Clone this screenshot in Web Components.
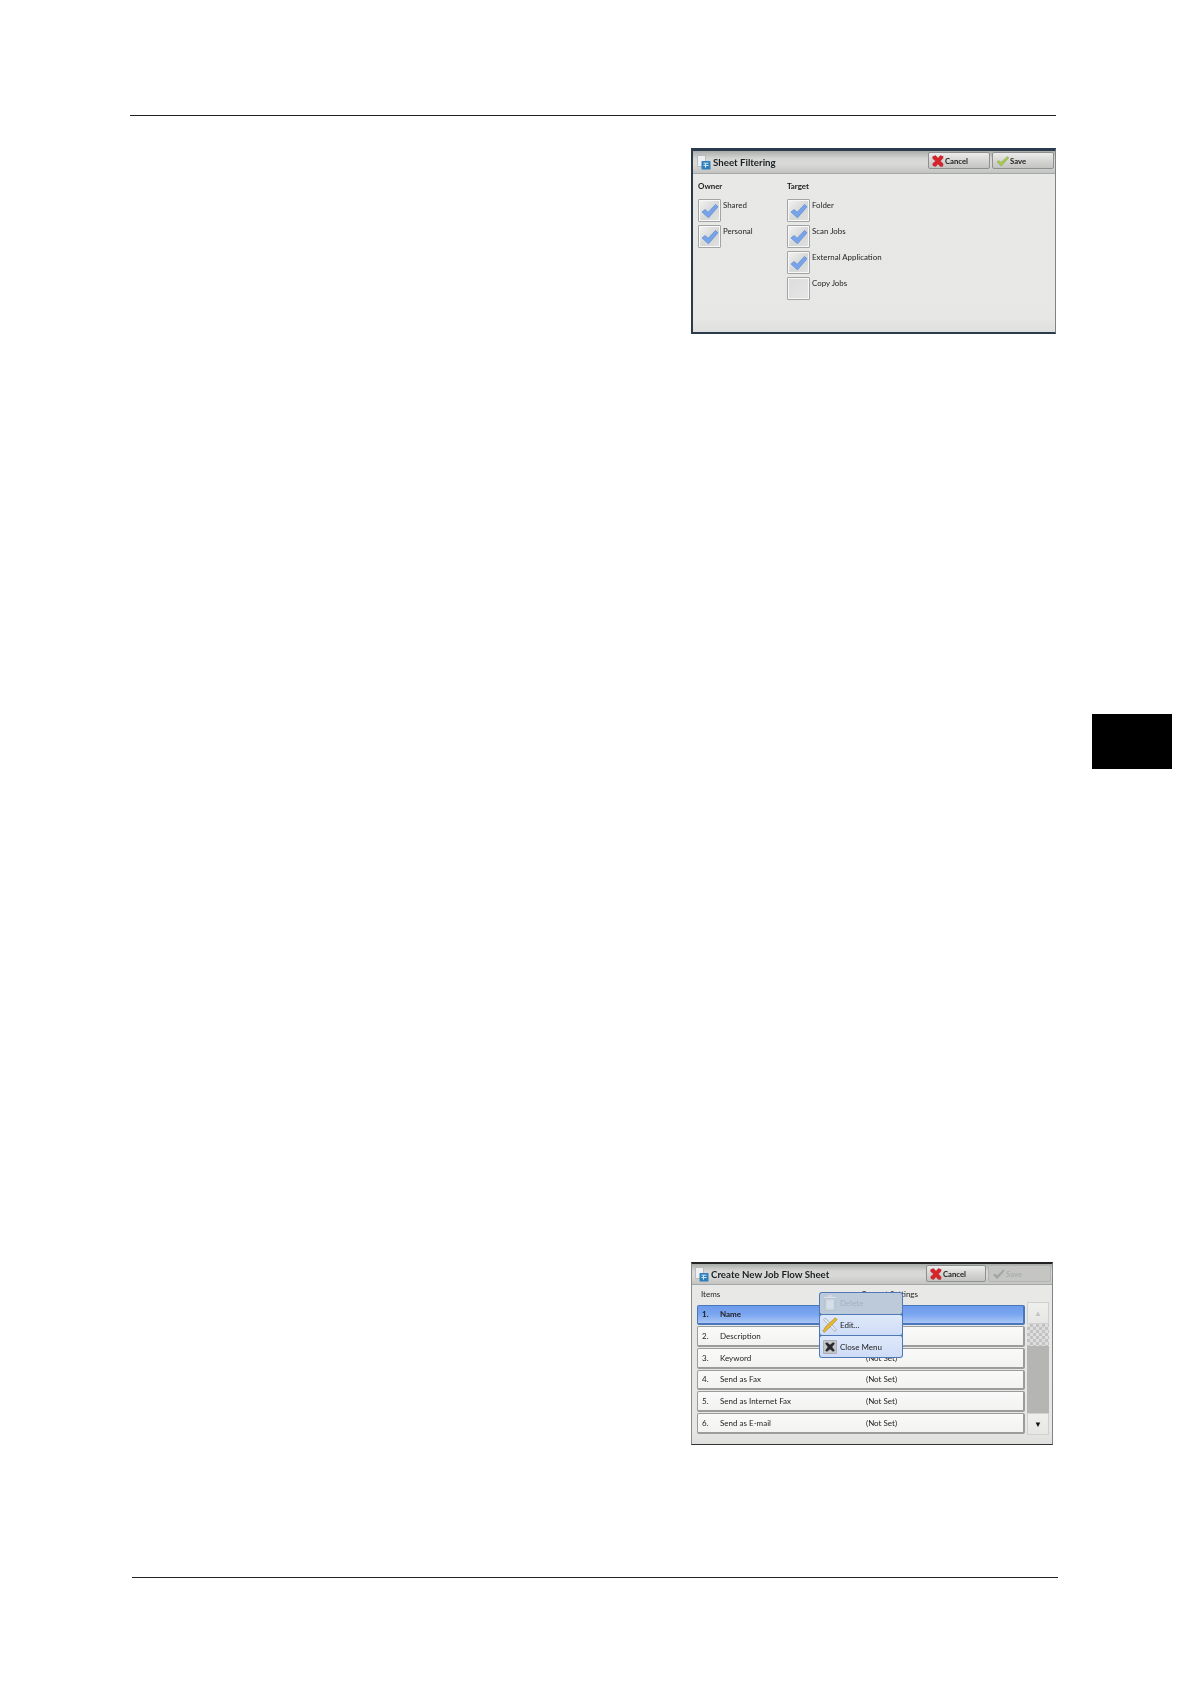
<!DOCTYPE html>
<html lang="en"><head><meta charset="utf-8"><title>Sheets</title>
<style>
html,body{margin:0;padding:0;background:#fff}
body{font-family:Lato,"Liberation Sans",sans-serif;color:#222}
</style></head><body>
<manual-page>
  <sheet-panel slot="top" title-text="Sheet Filtering" style="--w:365px;--h:186px;--bar:23px;--lb:2px solid #2b3a4c;--tb:3px solid #2b3a4c;--bb:2px solid #2b3a4c;--pl:4px">
    <ui-btn slot="actions" icon="x" style="--bw:62px">Cancel</ui-btn>
    <ui-btn slot="actions" icon="ok" style="--bw:62px">Save</ui-btn>
    <filter-body>
      <check-col slot="owner" heading="Owner">
        <ui-check checked>Shared</ui-check>
        <ui-check checked>Personal</ui-check>
      </check-col>
      <check-col slot="target" heading="Target">
        <ui-check checked>Folder</ui-check>
        <ui-check checked>Scan Jobs</ui-check>
        <ui-check checked>External Application</ui-check>
        <ui-check>Copy Jobs</ui-check>
      </check-col>
    </filter-body>
  </sheet-panel>
  <sheet-panel slot="bottom" title-text="Create New Job Flow Sheet" style="--w:362px;--h:183px;--bar:21px;--lb:1px solid #8a8c8c;--tb:2px solid #222;--bb:1px solid #333;--pl:3px">
    <ui-btn slot="actions" icon="x" style="--bw:60px">Cancel</ui-btn>
    <ui-btn slot="actions" icon="ok" disabled style="--bw:63px">Save</ui-btn>
    <item-list>
      <item-row selected num="1." name="Name" value=""></item-row>
      <item-row num="2." name="Description" value=""></item-row>
      <item-row num="3." name="Keyword" value="(Not Set)"></item-row>
      <item-row num="4." name="Send as Fax" value="(Not Set)"></item-row>
      <item-row num="5." name="Send as Internet Fax" value="(Not Set)"></item-row>
      <item-row num="6." name="Send as E-mail" value="(Not Set)"></item-row>
      <pop-menu slot="menu">
        <menu-item icon="trash" disabled>Delete</menu-item>
        <menu-item icon="edit">Edit...</menu-item>
        <menu-item icon="close">Close Menu</menu-item>
      </pop-menu>
    </item-list>
  </sheet-panel>
</manual-page>
<script>
function def(name, html){
  customElements.define(name, class extends HTMLElement{
    constructor(){super();this.attachShadow({mode:'open'}).innerHTML=typeof html==='function'?'':html;}
    connectedCallback(){ if(typeof html==='function') this.shadowRoot.innerHTML=html(this); }
  });
}
const ICONS={
 x:`<svg width="12" height="12" viewBox="0 0 12 12"><path d="M.8 1.600 3.600.6 6 3.200 8.400.6l2.800 1-.4 2L8.400 6l2.800 3-.6 2.600-2.600-.4L6 8.800 3.800 11.400 1.200 10.800.6 8.800 3.600 6 .6 3.400z" fill="#d8232a" stroke="#a81c20" stroke-width=".4"/></svg>`,
 ok:`<svg width="13" height="12" viewBox="0 0 13 12"><path d="M1 7 3 5.500 5 7.500 11.500 1.500 12.800 2.800 5.200 11z" fill="#a4cc48" stroke="#8a9c50" stroke-width=".5"/></svg>`,
 okOff:`<svg width="13" height="12" viewBox="0 0 13 12"><path d="M1 7 3 5.500 5 7.500 11.500 1.500 12.800 2.800 5.200 11z" fill="#a2a6a6"/></svg>`,
 trash:`<svg width="14" height="16" viewBox="0 0 14 16"><path d="M2 3.500h10v12H2z" fill="#ccd6e0" stroke="#b0bbc8" stroke-width=".7"/><path d="M1 2.500h12M4.500 1h5M5 5.500v8M7 5.500v8M9 5.500v8" stroke="#dfe6ed" stroke-width="1.100" fill="none"/></svg>`,
 edit:`<svg width="16" height="16" viewBox="0 0 20 20"><path d="M2 3.500 4 1.500 18 16l-2 2z" fill="#eef1f5" stroke="#858b92" stroke-width=".8"/><path d="M16.500 1 19 3.200 8 14.500 3 19 1.200 17.500 5 11.500z" fill="#edb72c" stroke="#9c7d28" stroke-width=".7"/></svg>`,
 close:`<svg width="14" height="14" viewBox="0 0 16 16"><rect x=".3" y=".3" width="15.400" height="15.400" rx="1.500" fill="#c2c5c9" stroke="#7f838a" stroke-width=".6"/><path d="M2.500 4 4.500 2.500 8 5.500 11.500 2.500 13.500 4 10.500 8 13.500 12 11.500 13.500 8 10.500 4.500 13.500 2.500 12 5.500 8z" fill="#2a2a2a"/></svg>`
};
def('manual-page',`<style>
:host{display:flex;flex-direction:column;width:1190px;height:1684px;box-sizing:border-box;padding-top:115px;background:#fff}
.rule{height:1px;background:#222;flex:none}
.r1{margin:0 134px 0 130px}
.top{display:block;margin:32px 0 0 691px}
.tab{width:80px;height:55px;background:#000;margin:380px 0 0 1092px;flex:none}
.bot{display:block;margin:493px 0 0 691px}
.r2{margin:132px 132px 0 132px}
</style>
<div class="rule r1"></div>
<div class="top"><slot name="top"></slot></div>
<div class="tab"></div>
<div class="bot"><slot name="bottom"></slot></div>
<div class="rule r2"></div>`);
def('sheet-panel',el=>`<style>
:host{display:flex;flex-direction:column;box-sizing:border-box;width:var(--w);height:var(--h);background:linear-gradient(#e8e8e6,#e7e7e5 92%,#dfdfdd);border-right:1px solid #7f8486;border-left:var(--lb);border-top:var(--tb);border-bottom:var(--bb);filter:blur(.35px)}
.bar{height:var(--bar);flex:none;box-sizing:border-box;display:flex;align-items:center;padding:0 1px 0 var(--pl);background:linear-gradient(#a9adaa,#d6d7d4 35%,#d9dad7 60%,#c3c4c1);border-bottom:1px solid #a5a8a8}
.ic{width:14px;height:15px;margin-right:2px;flex:none}
.t{font:700 9.700px Lato,sans-serif;color:#1a1f22;flex:1;white-space:nowrap}
.acts{display:flex;gap:2px;align-self:flex-start;margin-top:1px}
.body{flex:1;position:relative;min-height:0}
</style>
<div class="bar"><svg class="ic" viewBox="0 0 14 15"><path d="M.5.500h8v11h-8z" fill="#eef0f1" stroke="#b0b3b6" stroke-width=".8"/><rect x="4.500" y="6" width="9" height="8.500" rx=".8" fill="#2f7fbd"/><path d="M6.500 8.200h5M6.500 10.500h5M8.500 8.200v4.500" stroke="#cfe8f7" stroke-width="1" fill="none"/></svg><span class="t">${el.getAttribute('title-text')}</span><div class="acts"><slot name="actions"></slot></div></div>
<div class="body"><slot></slot></div>`);
def('ui-btn',el=>{const off=el.hasAttribute('disabled');const ic=el.getAttribute('icon');return `<style>
:host{display:block;width:var(--bw);height:17px;box-sizing:border-box;border:1px solid ${off?'#b2b4b2':'#8d9090'};border-radius:2px;background:linear-gradient(#ececea,#d2d3d0 60%,#c4c5c2)${off?';background:#c5c6c4':''};font:700 7.700px Lato,sans-serif;color:${off?'#a9adad':'#222'}}
div{display:flex;align-items:center;gap:1px;height:100%;padding-left:3px}
svg{display:block;flex:none}
</style><div>${off&&ic==='ok'?ICONS.okOff:ICONS[ic]}<span><slot></slot></span></div>`});
def('filter-body',`<style>
:host{display:flex;padding:6px 0 0 5px}
.a{width:89px}
</style><div class="a"><slot name="owner"></slot></div><div><slot name="target"></slot></div>`);
def('check-col',el=>`<style>
:host{display:block}
h4{margin:0 0 7px;font:700 7.900px/12px Lato,sans-serif;color:#222}
.l{display:flex;flex-direction:column;gap:3px}
</style><h4>${el.getAttribute('heading')}</h4><div class="l"><slot></slot></div>`);
def('ui-check',el=>`<style>
:host{display:flex;align-items:flex-start;gap:2px;font:400 7.900px/12px Lato,sans-serif;color:#1e1e1e;white-space:nowrap}
.b{width:23px;height:23px;box-sizing:border-box;border:1px solid #a2a4a4;border-radius:1px;background:${el.hasAttribute('checked')?'linear-gradient(135deg,#f4f4f4,#d5d6d6 55%,#e2e2e2)':'linear-gradient(135deg,#dcdcdc,#e6e6e6)'};box-shadow:inset 0 0 0 1px #f8f8f8;display:flex;align-items:center;justify-content:center;flex:none}
svg{display:block}
</style><div class="b">${el.hasAttribute('checked')?`<svg width="18" height="16" viewBox="0 0 18 16"><path d="M1 9 4 6.500l3.200 2.800L14.500 1.500 17 3.800 7.500 14.800z" fill="#77a4ea" stroke="#4f7fcc" stroke-width=".6"/></svg>`:''}</div><span><slot></slot></span>`);
def('item-list',`<style>
:host{display:block;position:relative;height:100%;font:400 8px/12px Lato,sans-serif;color:#1e1e1e}
.head{display:flex;height:18px;align-items:center;padding-left:9px}
.head span:first-child{width:160px}
.main{display:flex;margin-left:5px;margin-top:1.500px}
.rows{display:flex;flex-direction:column;gap:1px;width:328px}
.sb{width:22px;margin:-2.500px 0 0 2px;display:flex;flex-direction:column;height:133px}
.btn{height:22px;background:linear-gradient(#efefed,#e6e6e4);border:1px solid #d0d0ce;box-sizing:border-box;display:flex;align-items:center;justify-content:center;font-size:8px;color:#111}
.up{color:#c4c4c2}
.th{height:22px;background:repeating-conic-gradient(#c2c2c2 0 25%,#dedede 0 50%) 0 0/6px 6px}
.tr{flex:1;background:#b5b6b4}
.m{position:absolute;left:127px;top:7px}
</style>
<div class="head"><span>Items</span><span>Current Settings</span></div>
<div class="main"><div class="rows"><slot></slot></div>
<div class="sb"><div class="btn up">▲</div><div class="th"></div><div class="tr"></div><div class="btn">▼</div></div></div>
<div class="m"><slot name="menu"></slot></div>`);
def('item-row',el=>{const s=el.hasAttribute('selected');return `<style>
:host{display:flex;align-items:center;box-sizing:border-box;height:20.700px;border:1px solid ${s?'#4a76bb':'#9b9d9b'};border-width:1px 2px 2px 1px;border-radius:2px;background:${s?'linear-gradient(#6d9bec,#7ba6f0 50%,#a9c6f5)':'linear-gradient(#fafafa,#f2f2f0)'};padding-left:4px;white-space:nowrap;color:#1e1e1e}
.n{width:18px;${s?'font-weight:700':''}}.a{width:146px;${s?'font-weight:700':''}}
</style><span class="n">${el.getAttribute('num')}</span><span class="a">${el.getAttribute('name')}</span><span>${el.getAttribute('value')}</span>`});
def('pop-menu',`<style>
:host{display:flex;flex-direction:column;gap:1px;width:84px;height:66px;box-sizing:border-box;background:#4f78b6;padding:1px;border-radius:3px}
</style><slot></slot>`);
def('menu-item',el=>{const off=el.hasAttribute('disabled');return `<style>
:host{display:flex;flex:1;align-items:center;gap:2px;padding-left:2px;border-radius:2px;background:${off?'#bdcada':'linear-gradient(#dfe9fb,#cfdcf6)'};color:${off?'#a6b1be':'#222'};font:400 8px/12px Lato,sans-serif;white-space:nowrap}
svg{display:block;flex:none}div{width:16px;display:flex;justify-content:center}
</style><div>${ICONS[el.getAttribute('icon')]}</div><span><slot></slot></span>`});
</script>
</body></html>
